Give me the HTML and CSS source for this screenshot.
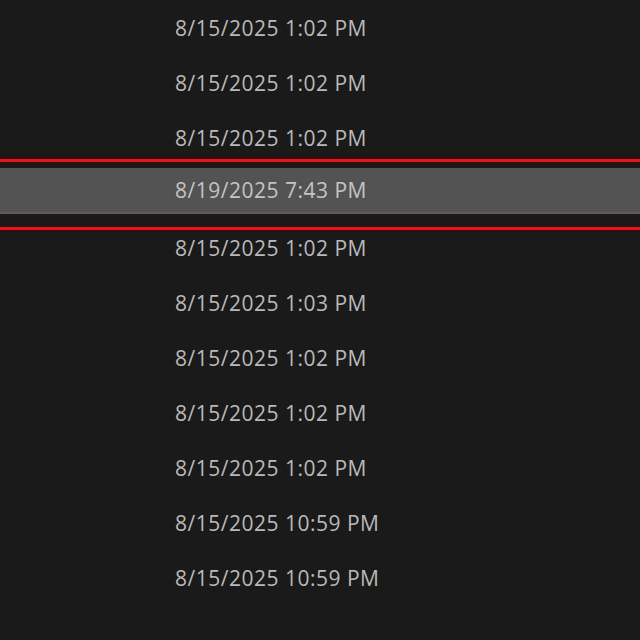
FILE: index.html
```html
<!DOCTYPE html>
<html lang="en">
<head>
  <meta charset="UTF-8" />
  <meta name="viewport" content="width=device-width, initial-scale=1.0"/>
  <title>Date modified</title>
  <link rel="stylesheet" href="styles.css">
</head>
<body>
  <div class="file-list">
    <div class="row"><span class="date">8/15/2025 1:02 PM</span></div>
    <div class="row"><span class="date">8/15/2025 1:02 PM</span></div>
    <div class="row"><span class="date">8/15/2025 1:02 PM</span></div>
    <div class="row selected">
      <div class="band"><span class="date">8/19/2025 7:43 PM</span></div>
    </div>
    <div class="row"><span class="date">8/15/2025 1:02 PM</span></div>
    <div class="row"><span class="date">8/15/2025 1:03 PM</span></div>
    <div class="row"><span class="date">8/15/2025 1:02 PM</span></div>
    <div class="row"><span class="date">8/15/2025 1:02 PM</span></div>
    <div class="row"><span class="date">8/15/2025 1:02 PM</span></div>
    <div class="row"><span class="date">8/15/2025 10:59 PM</span></div>
    <div class="row"><span class="date">8/15/2025 10:59 PM</span></div>
  </div>
</body>
</html>
```
FILE: styles.css
```css
body {
  margin: 0;
  background-color: #1a1a1a;
  font-family: 'Open Sans', 'Noto Sans', sans-serif;
  color: #b9b9b9;
}
.file-list {
  display: flex;
  flex-direction: column;
}
.row {
  height: 55px;
  display: flex;
  align-items: center;
  padding-left: 175px;
}
.date {
  font-size: 21px;
  letter-spacing: 0.5px;
  white-space: nowrap;
}
.row.selected {
  display: block;
  height: auto;
  padding: 6px 0 13px 0;
  margin: -6px 0 -10px 0;
  border-top: 3px solid #e8141c;
  border-bottom: 3px solid #e8141c;
  background-color: #1c1818;
  box-shadow: 0 -2px 3px #3a0c0e, 0 2px 3px #3a0c0e;
}
.band {
  height: 44px;
  display: flex;
  align-items: center;
  padding-left: 175px;
  background-color: #535353;
  border-bottom: 2px solid #5e5a60;
  color: #c4c4c4;
}
```
